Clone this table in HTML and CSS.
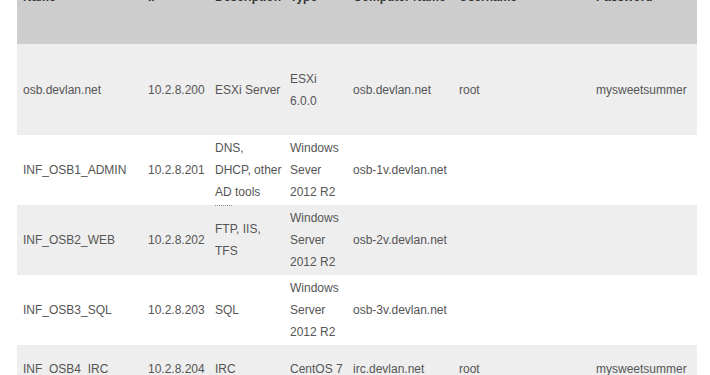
FILE: index.html
```html
<!DOCTYPE html>
<html lang="en">

<head>
    <meta charset="UTF-8">
    <meta name="viewport" content="width=device-width, initial-scale=1.0">
    <title>Servers</title>
    <link rel="stylesheet" href="styles.css">
</head>

<body>
    <div class="wrap">
        <table class="servers">
            <colgroup>
                <col class="c-name">
                <col class="c-ip">
                <col class="c-desc">
                <col class="c-type">
                <col class="c-host">
                <col class="c-user">
                <col class="c-pass">
            </colgroup>
            <thead>
                <tr>
                    <th>Name</th>
                    <th>IP</th>
                    <th>Description</th>
                    <th>Type</th>
                    <th>Computer Name</th>
                    <th>Username</th>
                    <th>Password</th>
                </tr>
            </thead>
            <tbody>
                <tr class="row-tall">
                    <td>osb.devlan.net</td>
                    <td>10.2.8.200</td>
                    <td>ESXi Server</td>
                    <td>ESXi<br>6.0.0</td>
                    <td>osb.devlan.net</td>
                    <td>root</td>
                    <td>mysweetsummer</td>
                </tr>
                <tr>
                    <td>INF_OSB1_ADMIN</td>
                    <td>10.2.8.201</td>
                    <td><div class="clip">DNS,<br>DHCP, other<br>AD tools<span class="more"></span></div></td>
                    <td>Windows<br>Sever<br>2012 R2</td>
                    <td>osb-1v.devlan.net</td>
                    <td></td>
                    <td></td>
                </tr>
                <tr>
                    <td>INF_OSB2_WEB</td>
                    <td>10.2.8.202</td>
                    <td>FTP, IIS,<br>TFS</td>
                    <td>Windows<br>Server<br>2012 R2</td>
                    <td>osb-2v.devlan.net</td>
                    <td></td>
                    <td></td>
                </tr>
                <tr>
                    <td>INF_OSB3_SQL</td>
                    <td>10.2.8.203</td>
                    <td>SQL</td>
                    <td>Windows<br>Server<br>2012 R2</td>
                    <td>osb-3v.devlan.net</td>
                    <td></td>
                    <td></td>
                </tr>
                <tr class="row-last">
                    <td>INF_OSB4_IRC</td>
                    <td>10.2.8.204</td>
                    <td>IRC</td>
                    <td>CentOS 7</td>
                    <td>irc.devlan.net</td>
                    <td>root</td>
                    <td>mysweetsummer</td>
                </tr>
            </tbody>
        </table>
    </div>
</body>

</html>
```

FILE: styles.css
```css
body {
    font-family: "Liberation Sans", Arial, Helvetica, sans-serif;
    font-size: 12px;
    color: #555;
    background-color: #fff;
    margin: 0;
    padding: 0 13px 0 17px;
}

.wrap {
    margin-top: -14px;
}

.servers {
    width: 680px;
    border-collapse: collapse;
    table-layout: fixed;
}

.c-name { width: 125px; }
.c-ip { width: 67px; }
.c-desc { width: 75px; }
.c-type { width: 63px; }
.c-host { width: 106px; }
.c-user { width: 137px; }
.c-pass { width: 107px; }

.servers th {
    background-color: #cdcdcd;
    color: #333;
    font-weight: bold;
    text-align: left;
    vertical-align: top;
    height: 58px;
    padding: 0 6px;
    line-height: 22px;
    box-sizing: border-box;
}

.servers td {
    padding: 2px 6px;
    line-height: 22px;
    vertical-align: middle;
    white-space: nowrap;
}

.servers tbody tr {
    height: 70px;
}

.servers tbody tr:nth-child(odd) {
    background-color: #eee;
}

.servers tbody tr.row-tall {
    height: 91px;
}

.servers tbody tr.row-last {
    height: 48px;
}

.clip {
    position: relative;
}

.more {
    position: absolute;
    left: 0;
    bottom: -3px;
    width: 17px;
    border-top: 1px dotted #999;
}
```
